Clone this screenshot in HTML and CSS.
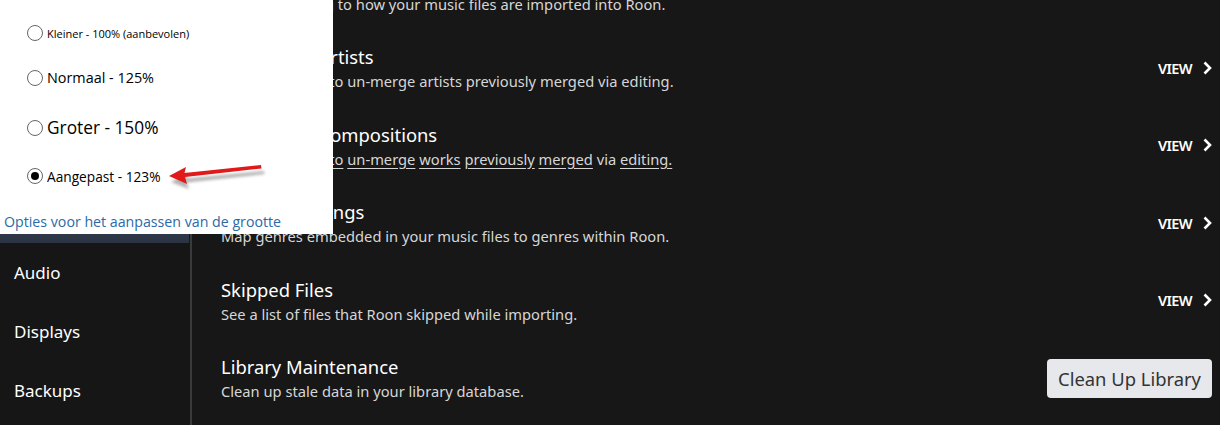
FILE: index.html
```html
<!DOCTYPE html>
<html lang="en">
<head>
<meta charset="utf-8">
<title>Roon Settings - Library</title>
<link rel="stylesheet" href="styles.css">
</head>
<body>
<div class="app">
  <nav class="sidebar">
    <div class="nav-item">General</div>
    <div class="nav-item">Storage</div>
    <div class="nav-item">Services</div>
    <div class="nav-item selected">Library</div>
    <div class="nav-item">Audio</div>
    <div class="nav-item">Displays</div>
    <div class="nav-item">Backups</div>
  </nav>
  <div class="divider"></div>
  <main class="content">
    <div class="rows">
      <div class="row">
        <div class="text"><div class="title">Import Settings</div><div class="desc">Settings relating to how your music files are imported into Roon.</div></div>
        <div class="view">VIEW <svg class="chev" width="9" height="14" viewBox="0 0 9 14"><path d="M1.5 1.5 L7 7 L1.5 12.5" fill="none" stroke="#fff" stroke-width="2.6"/></svg></div>
      </div>
      <div class="row">
        <div class="text"><div class="title">Unmerged Artists</div><div class="desc">Use this screen to un-merge artists previously merged via editing.</div></div>
        <div class="view">VIEW <svg class="chev" width="9" height="14" viewBox="0 0 9 14"><path d="M1.5 1.5 L7 7 L1.5 12.5" fill="none" stroke="#fff" stroke-width="2.6"/></svg></div>
      </div>
      <div class="row">
        <div class="text"><div class="title">Unmerged Compositions</div><div class="desc">Use this screen <span class="ul">to</span> <span class="ul">un-merge</span> <span class="ul">works</span> <span class="ul">previously</span> <span class="ul">merged</span> via <span class="ul">editing.</span></div></div>
        <div class="view">VIEW <svg class="chev" width="9" height="14" viewBox="0 0 9 14"><path d="M1.5 1.5 L7 7 L1.5 12.5" fill="none" stroke="#fff" stroke-width="2.6"/></svg></div>
      </div>
      <div class="row">
        <div class="text"><div class="title">Genre Mappings</div><div class="desc">Map genres embedded in your music files to genres within Roon.</div></div>
        <div class="view">VIEW <svg class="chev" width="9" height="14" viewBox="0 0 9 14"><path d="M1.5 1.5 L7 7 L1.5 12.5" fill="none" stroke="#fff" stroke-width="2.6"/></svg></div>
      </div>
      <div class="row">
        <div class="text"><div class="title">Skipped Files</div><div class="desc">See a list of files that Roon skipped while importing.</div></div>
        <div class="view">VIEW <svg class="chev" width="9" height="14" viewBox="0 0 9 14"><path d="M1.5 1.5 L7 7 L1.5 12.5" fill="none" stroke="#fff" stroke-width="2.6"/></svg></div>
      </div>
      <div class="row">
        <div class="text"><div class="title">Library Maintenance</div><div class="desc">Clean up stale data in your library database.</div></div>
        <button class="btn">Clean Up Library</button>
      </div>
    </div>
  </main>
</div>

<div class="popup">
  <label class="opt opt-1"><span class="radio"></span><span class="lbl">Kleiner - 100% (aanbevolen)</span></label>
  <label class="opt opt-2"><span class="radio"></span><span class="lbl">Normaal - 125%</span></label>
  <label class="opt opt-3"><span class="radio"></span><span class="lbl">Groter - 150%</span></label>
  <label class="opt opt-4"><span class="radio checked"></span><span class="lbl">Aangepast - 123%</span></label>
  <a class="link" href="#">Opties voor het aanpassen van de grootte</a>
  <svg class="arrow" width="110" height="30" viewBox="0 0 110 30">
    <defs>
      <filter id="sh" x="-20%" y="-50%" width="140%" height="200%">
        <feGaussianBlur stdDeviation="1.6"/>
      </filter>
    </defs>
    <g transform="translate(1,4)" opacity="0.45" filter="url(#sh)">
      <path d="M3 15 L20 5 L18 11.5 L96 4 L96.5 7 L18.5 15.5 L21 22 Z" fill="#555"/>
    </g>
    <path d="M2 13 L19 4 L17.5 10 L94 2 L94.5 5.5 L18 14 L20 21 Z" fill="#e0191b"/>
  </svg>
</div>
</body>
</html>
```

FILE: styles.css
```css
* { box-sizing: border-box; }
html, body { margin: 0; padding: 0; }
body {
  width: 1220px;
  height: 425px;
  overflow: hidden;
  background: #171717;
  font-family: "Noto Sans", "Open Sans", sans-serif;
  color: #fff;
  position: relative;
}
.app {
  display: flex;
  height: 425px;
  overflow: hidden;
}
.sidebar {
  width: 189px;
  flex: none;
  padding-top: 7px;
  background: #161616;
}
.nav-item {
  height: 59px;
  display: flex;
  align-items: center;
  padding-left: 14px;
  font-size: 17px;
  color: #fff;
}
.nav-item.selected {
  background: linear-gradient(#3f4d62 0%, #2b3443 100%);
}
.divider {
  width: 2px;
  flex: none;
  background: #3a3a3a;
  margin-left: 1px;
}
.content {
  flex: 1;
  padding: 0 8px 0 29px;
  overflow: hidden;
}
.rows {
  margin-top: -47.25px;
}
.row {
  height: 77.5px;
  display: flex;
  align-items: center;
  justify-content: space-between;
}
.title {
  font-size: 18.4px;
  line-height: 24px;
  color: #fff;
}
.desc {
  font-size: 14.7px;
  line-height: 24px;
  color: #d6d6d6;
}
.ul { text-decoration: underline; text-underline-offset: 3px; }
.view {
  display: flex;
  align-items: center;
  gap: 11px;
  margin-top: -3px;
  font-size: 14.5px;
  font-weight: 600;
  letter-spacing: -0.6px;
  color: #fff;
}
.chev { display: block; }
.btn {
  font-family: inherit;
  font-size: 18.4px;
  color: #333;
  background: #e6e8ec;
  border: none;
  border-radius: 4px;
  height: 39px;
  width: 165px;
  padding: 0;
  margin-top: -1px;
}

/* Windows scaling popup */
.popup {
  position: absolute;
  left: 0;
  top: 0;
  width: 333px;
  height: 234px;
  background: #fff;
  color: #000;
  font-family: "Open Sans", "Noto Sans", sans-serif;
  display: flex;
  flex-direction: column;
  overflow: hidden;
}
.opt {
  display: flex;
  align-items: center;
  padding-left: 27px;
}
.opt-1 { margin-top: 19px; height: 29px; font-size: 11px; }
.opt-2 { height: 61px; font-size: 14.4px; }
.opt-3 { height: 40px; font-size: 17.3px; }
.opt-4 { height: 58px; font-size: 13.7px; }
.radio {
  width: 16px;
  height: 16px;
  border: 1px solid #666;
  border-radius: 50%;
  margin-right: 4px;
  flex: none;
  display: flex;
  align-items: center;
  justify-content: center;
}
.radio.checked::after {
  content: "";
  width: 8px;
  height: 8px;
  border-radius: 50%;
  background: #000;
}
.link {
  display: block;
  padding-left: 4px;
  margin-top: 5px;
  font-size: 14.2px;
  line-height: 24px;
  color: #2a6aa8;
  text-decoration: none;
}
.arrow {
  position: absolute;
  left: 167px;
  top: 163px;
}
```
